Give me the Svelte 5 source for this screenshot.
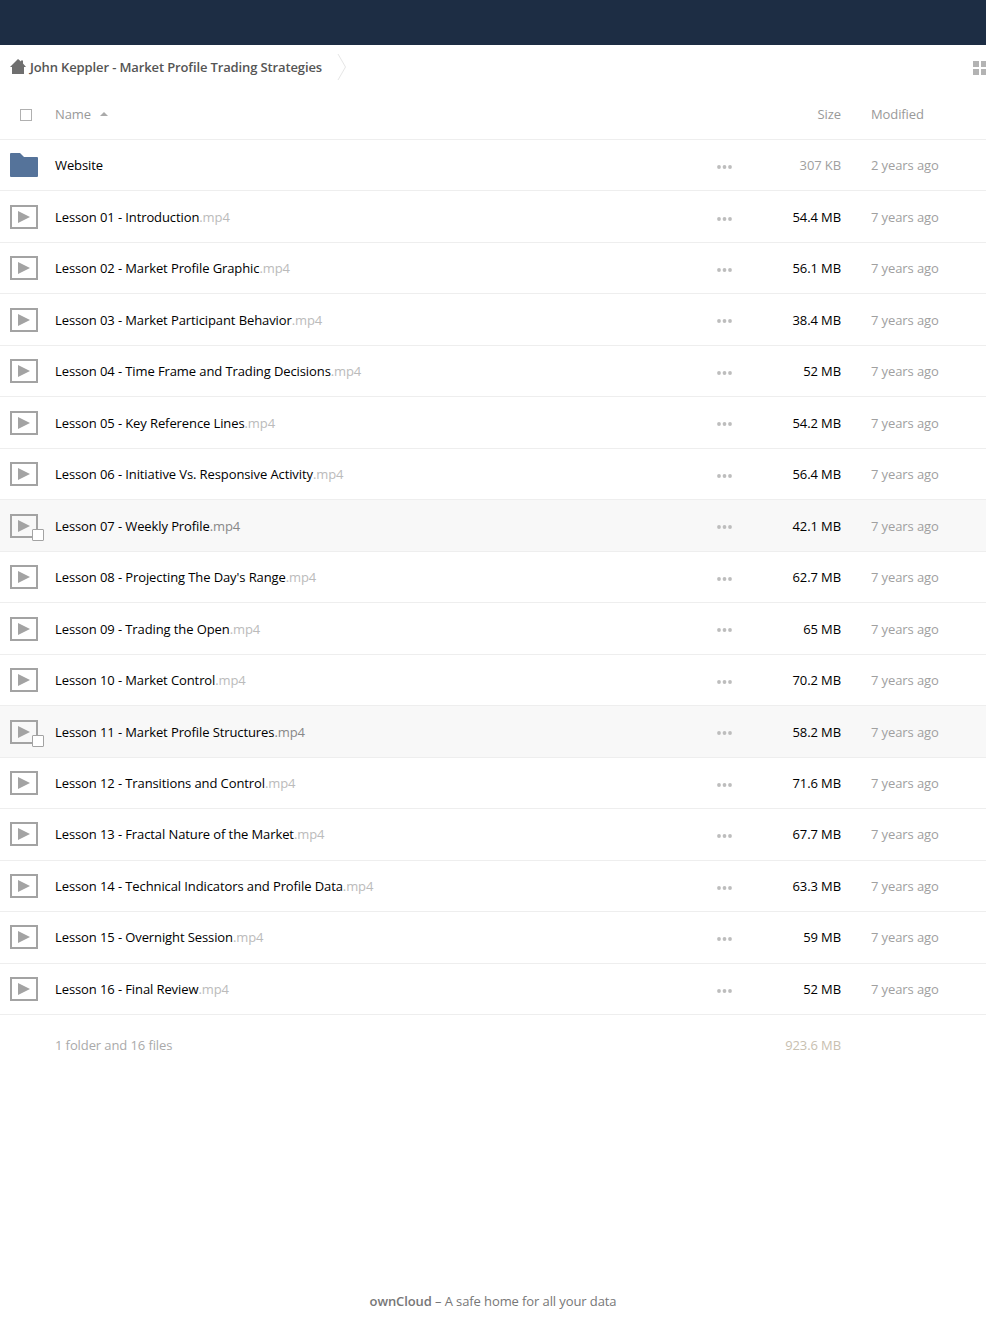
<script>
  const files = [
    ['Lesson 01 - Introduction', '54.4 MB'],
    ['Lesson 02 - Market Profile Graphic', '56.1 MB'],
    ['Lesson 03 - Market Participant Behavior', '38.4 MB'],
    ['Lesson 04 - Time Frame and Trading Decisions', '52 MB'],
    ['Lesson 05 - Key Reference Lines', '54.2 MB'],
    ['Lesson 06 - Initiative Vs. Responsive Activity', '56.4 MB'],
    ['Lesson 07 - Weekly Profile', '42.1 MB', true],
    ["Lesson 08 - Projecting The Day's Range", '62.7 MB'],
    ['Lesson 09 - Trading the Open', '65 MB'],
    ['Lesson 10 - Market Control', '70.2 MB'],
    ['Lesson 11 - Market Profile Structures', '58.2 MB', true],
    ['Lesson 12 - Transitions and Control', '71.6 MB'],
    ['Lesson 13 - Fractal Nature of the Market', '67.7 MB'],
    ['Lesson 14 - Technical Indicators and Profile Data', '63.3 MB'],
    ['Lesson 15 - Overnight Session', '59 MB'],
    ['Lesson 16 - Final Review', '52 MB']
  ];
</script>

{#snippet dots()}
  <svg class="dots" width="15" height="4" viewBox="0 0 15 4" aria-hidden="true">
    <circle cx="2" cy="2" r="1.9" /><circle cx="7.5" cy="2" r="1.9" /><circle cx="13" cy="2" r="1.9" />
  </svg>
{/snippet}

<div class="page">
  <header class="top"></header>
  <div class="crumbs">
    <svg class="home" width="16" height="15" viewBox="0 0 16 15" aria-hidden="true">
      <path d="M8 0 L11 2.6 V1.5 H13 V4.4 L16 8 H14 V15 H2 V8 H0 Z" fill="#6f6f6f" />
    </svg>
    <span class="crumb">John Keppler - Market Profile Trading Strategies</span>
    <svg class="chev" width="10" height="28" viewBox="0 0 10 28" aria-hidden="true">
      <path d="M1 1 L8.5 14 L1 27" fill="none" stroke="#e6e6e6" stroke-width="1" />
    </svg>
    <div class="grid-icon"><i></i><i></i><i></i><i></i></div>
  </div>

  <div class="row head">
    <div class="lead"><span class="check"></span></div>
    <div class="name">Name <span class="caret"></span></div>
    <div class="size">Size</div>
    <div class="date">Modified</div>
  </div>

  <div class="row item">
    <div class="lead">
      <svg width="28" height="24" viewBox="0 0 28 24" aria-hidden="true">
        <path d="M0 1 Q0 0 1 0 H10 L14 4 H27 Q28 4 28 5 V23 Q28 24 27 24 H1 Q0 24 0 23 Z" fill="#55739a" />
      </svg>
    </div>
    <div class="name"><span class="base">Website</span></div>
    <div class="act">{@render dots()}</div>
    <div class="size muted">307 KB</div>
    <div class="date">2 years ago</div>
  </div>

  {#each files as [title, size, hover]}
    <div class="row item" class:hover>
      <div class="lead">
        <span class="video"><span class="tri"></span></span>
        {#if hover}<span class="thumb-check"></span>{/if}
      </div>
      <div class="name"><span class="base">{title}</span><span class="ext">.mp4</span></div>
      <div class="act">{@render dots()}</div>
      <div class="size">{size}</div>
      <div class="date">7 years ago</div>
    </div>
  {/each}

  <div class="row summary">
    <div class="lead"></div>
    <div class="name">1 folder and 16 files</div>
    <div class="size">923.6 MB</div>
    <div class="date"></div>
  </div>

  <footer class="foot"><b>ownCloud</b> – A safe home for all your data</footer>
</div>

<style>
  :global(body) { margin: 0; background: #fff; }
  .page {
    width: 986px; height: 1332px; overflow: hidden; display: flex; flex-direction: column;
    font-family: "Open Sans", sans-serif; font-size: 13px; color: #000; letter-spacing: -0.1px;
  }
  .top { height: 45px; flex: none; background: #1d2d44; }
  .crumbs { height: 44px; flex: none; display: flex; align-items: center; padding-left: 10px; }
  .home { margin-right: 4px; margin-top: -1px; }
  .crumb { font-weight: 600; color: #555; letter-spacing: -0.127px; }
  .chev { margin-left: 15px; }
  .grid-icon {
    margin-left: auto; width: 14px; margin-right: -1px; display: grid;
    grid-template-columns: 6px 6px; grid-auto-rows: 6px; gap: 2px; margin-top: 1px;
  }
  .grid-icon i { background: #b3b3b3; }
  .row {
    height: 51.48px; box-sizing: border-box; flex: none; display: flex; align-items: center;
    border-bottom: 1px solid #eee;
  }
  .item { padding-top: 0.3px; }
  .row.hover { background: #f8f8f8; }
  .lead { width: 55px; flex: none; padding-left: 10px; box-sizing: border-box; position: relative; display: flex; align-items: center; }
  .name { flex: 1; min-width: 0; }
  .act { width: 34px; flex: none; display: flex; margin-right: 7px; padding-top: 3.3px; }
  .dots { fill: #bdbdbd; }
  .size { width: 83px; flex: none; text-align: right; white-space: nowrap; color: #000; }
  .date { width: 145px; flex: none; box-sizing: border-box; padding-left: 30px; color: #a0a0a0; }
  .muted { color: #a0a0a0; }
  .head { height: 51.02px; color: #999; }
  .head .name, .head .size, .head .date { color: #999; }
  .head .name { display: flex; align-items: center; gap: 9px; }
  .check { display: block; width: 10px; height: 10px; border: 1px solid #b0b0b0; margin-left: 10px; margin-top: 1px; background: #fff; }
  .caret { border: 4px solid transparent; border-top: 0; border-bottom: 4px solid #aaa; }
  .ext { color: #bbb; }
  .hover .ext { color: #888; }
  .video {
    display: flex; align-items: center; justify-content: center; box-sizing: border-box;
    width: 28px; height: 24px; border: 2px solid #a3a3a3;
  }
  .tri { border-left: 12px solid #a3a3a3; border-top: 6.5px solid transparent; border-bottom: 6.5px solid transparent; }
  .thumb-check {
    position: absolute; left: 32px; top: 50%; margin-top: 3px; width: 10px; height: 10px;
    background: #fff; border: 1px solid #a3a3a3; border-radius: 1px;
  }
  .summary { border-bottom: 0; color: #b2b2b2; height: 60px; padding-top: 1px; }
  .summary .size { color: #c8c0b0; }
  .summary .name { color: #aaa; }
  .foot { margin-top: auto; height: 40px; text-align: center; color: #777; }
  .foot b { font-weight: 600; }
</style>
